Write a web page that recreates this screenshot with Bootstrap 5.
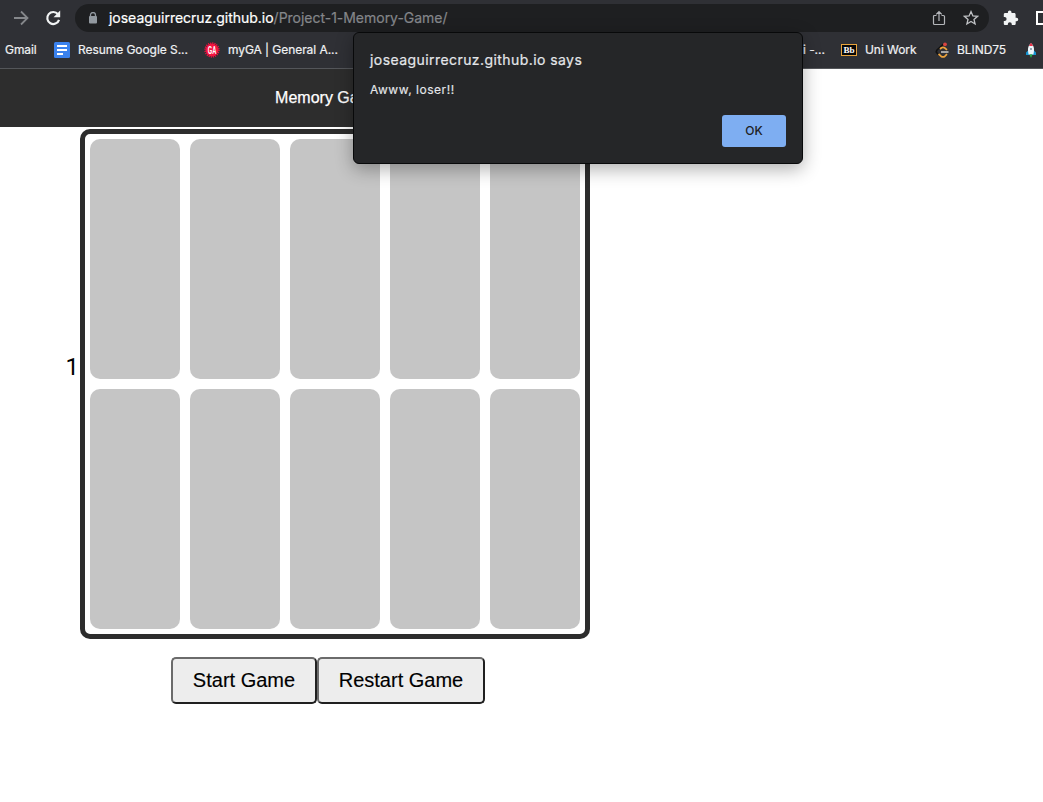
<!DOCTYPE html>
<html lang="en">
<head>
<meta charset="utf-8">
<meta name="viewport" content="width=device-width, initial-scale=1">
<title>Memory Game</title>
<link href="https://cdn.jsdelivr.net/npm/bootstrap@5.3.0/dist/css/bootstrap.min.css" rel="stylesheet">
<style>
body{height:802px;overflow:hidden;background:#fff;font-family:Inter,"Liberation Sans",sans-serif}
.chrome{height:69px;background:#2f3035;border-bottom:1px solid #54565a;color:#f0f1f3}
.toolbar{height:36px}
.toolbar svg,.bookmarks svg{display:block;flex:none}
.forward{margin-left:13px}
.reload{margin-left:16px}
.address{width:914px;height:28px;margin-left:14px;border-radius:14px;background:#1e1f21;font-size:14px}
.lock{margin-left:13px}
.address .url{margin-left:11px;margin-top:-1px;color:#84868a;letter-spacing:-.02px;-webkit-text-stroke:.2px}
.address .url span{color:#fff}
.star{margin-left:17px;margin-right:10px}
.puzzle{margin-left:14px}
.panel{margin-left:17px}
.bookmarks{height:28px;font-size:12px;letter-spacing:-.06px;-webkit-text-stroke:.2px}
.bookmark{flex:none;gap:8px}
.page{width:656px;font-family:"Liberation Sans",Arial,sans-serif;color:#000}
.title-bar{height:58px;background:#2d2d2d;font-size:16px;-webkit-text-stroke:.25px}
.score{width:80px;font-family:Roboto,sans-serif;font-size:24px;line-height:28px;padding-right:1px;padding-bottom:34px}
.board{width:510px;height:510px;border:5px solid #2d2d2d;border-radius:10px;display:grid;grid-template-columns:repeat(5,90px);grid-template-rows:repeat(2,240px);gap:10px;padding:5px}
.tile{background:#c5c5c5;border-radius:10px}
.game-btn{height:47px;background:#ededed;border:2px solid;border-color:#6b6b6b #202020 #202020 #6b6b6b;border-radius:5px;font-size:20px;color:#000;padding:0 0 2px;-webkit-text-stroke:.15px}
.alert-box{left:353px;top:32px;width:450px;height:132px;background:#252628;border:1px solid #08090a;border-radius:6px;box-shadow:0 5px 18px rgba(0,0,0,.32);color:#e4e6ea;padding:16px}
.alert-box h1{font-size:14px;line-height:22px;font-weight:400;margin:0;letter-spacing:.43px;-webkit-text-stroke:.2px}
.alert-box p{font-size:12px;line-height:20px;margin:9px 0 0;letter-spacing:.53px;-webkit-text-stroke:.15px}
.ok-btn{width:64px;height:32px;background:#7eaef2;border:0;border-radius:3px;color:#202124;font-size:12px;font-weight:500;padding:0;margin-top:15px}
</style>
</head>
<body>
<header class="chrome">
  <div class="toolbar d-flex align-items-center">
    <svg class="forward" width="16" height="16" viewBox="0 0 16 16" fill="none" stroke="#85878b" stroke-width="1.8"><path d="M1 8h13M8 1.5 14.5 8 8 14.5"/></svg>
    <svg class="reload" width="16" height="16" viewBox="0 0 16 16"><path d="M13 4.300A6 6 0 1 0 14 9.800" fill="none" stroke="#f1f3f4" stroke-width="2.200"/><path d="M15.200.500v6.700H8.500z" fill="#f1f3f4"/></svg>
    <div class="address d-flex align-items-center">
      <svg class="lock" width="10" height="12" viewBox="0 0 10 12"><path d="M2.500 5V3a2.500 2.500 0 0 1 5 0v2" fill="none" stroke="#9299a0" stroke-width="1.300"/><rect x="1" y="4" width="8" height="7.500" rx="1" fill="#9299a0"/></svg>
      <div class="url"><span>joseaguirrecruz.github.io</span>/Project-1-Memory-Game/</div>
      <svg class="ms-auto" width="14" height="16" viewBox="0 0 14 16" fill="none" stroke="#b4b6ba" stroke-width="1.200"><path d="M4.500 5.500h-2q-1 0-1 1v7q0 1 1 1h9q1 0 1-1v-7q0-1-1-1h-2M7 11V1.800M4.200 4.400 7 1.600l2.800 2.800"/></svg>
      <svg class="star" width="16" height="16" viewBox="0 0 16 16" fill="none" stroke="#c0c2c5" stroke-width="1.300"><path d="m8 1.600 1.900 4.300 4.700.4-3.600 3.100 1.100 4.600L8 11.500 3.900 14 5 9.400 1.400 6.300l4.700-.4z"/></svg>
    </div>
    <svg class="puzzle" width="16" height="16" viewBox="0 0 16 16" fill="#f1f3f4"><path d="M13.500 7.700h-.9V4.500c0-.8-.6-1.400-1.400-1.400H8.500v-.9a1.800 1.800 0 0 0-3.600 0v.9H2.200C1.400 3.100.800 3.700.800 4.500v2.600h.8a2 2 0 0 1 0 4H.800v2.600c0 .8.6 1.400 1.400 1.400h2.600v-.9a2 2 0 0 1 4 0v.9h2.500c.8 0 1.400-.6 1.400-1.400v-2.500h.8a1.750 1.750 0 0 0 0-3.500z"/></svg>
    <svg class="panel" width="7" height="16" viewBox="0 0 7 16"><path d="M8 2H1v12h7" fill="none" stroke="#fff" stroke-width="2"/></svg>
  </div>
  <nav class="bookmarks d-flex align-items-center text-nowrap">
    <div class="bookmark d-flex align-items-center" style="width:54px;padding-left:5px">Gmail</div>
    <div class="bookmark d-flex align-items-center" style="width:150px"><svg width="16" height="16" viewBox="0 0 16 16"><rect width="16" height="16" rx="1.500" fill="#3b82ee"/><path d="M3 4h10M3 8h10M3 12h6" stroke="#fff" stroke-width="2"/></svg><span>Resume Google S...</span></div>
    <div class="bookmark d-flex align-items-center" style="width:599px"><svg width="16" height="16" viewBox="0 0 16 16"><circle cx="8" cy="8" r="6.500" fill="#f5123f"/><circle cx="8" cy="8" r="7" fill="none" stroke="#f5123f" stroke-width="1.300" stroke-dasharray="1.200 1"/><text x="8" y="11.500" text-anchor="middle" textLength="8.500" lengthAdjust="spacingAndGlyphs" font-family="Liberation Sans" font-size="10" font-weight="700" fill="#fff">GA</text></svg><span>myGA | General A...</span></div>
    <div class="bookmark d-flex align-items-center" style="width:38px">i -...</div>
    <div class="bookmark d-flex align-items-center" style="width:93px"><svg width="16" height="16" viewBox="0 0 16 16"><rect x=".5" y="2.500" width="15" height="11" fill="#080808" stroke="#e8a33b"/><text x="8" y="11" text-anchor="middle" textLength="11" lengthAdjust="spacingAndGlyphs" font-family="Liberation Serif" font-size="8.500" font-weight="700" fill="#fff">Bb</text></svg><span>Uni Work</span></div>
    <div class="bookmark d-flex align-items-center" style="width:89px;gap:7px"><svg width="16" height="16" viewBox="0 0 16 16" fill="none" stroke-width="1.700"><path d="M9.500 2 3 8Q1.700 9.500 3 11l2 2" stroke="#111"/><path d="M4.500 12 7 14.200Q9 15.700 11 14.200L13 12.200M6 7 7.500 5.800Q9 4.800 10.500 5.800L13 7.800" stroke="#eda33c"/><path d="M7 10h7.500" stroke="#bbb"/><circle cx="11" cy="2.300" r="1.900" fill="#d84440"/></svg><span>BLIND75</span></div>
    <svg width="16" height="16" viewBox="0 0 16 16"><path d="M6 7.500 3 10.500V13h4zM10 7.500l3 3V13H9z" fill="#1594d2"/><path d="M8 1.200C4.500 4 4.500 8 5.700 12.500h4.600C11.500 8 11.500 4 8 1.200z" fill="#eef5fa"/><path d="M8 .800 5.900 4h4.200z" fill="#e9324a"/><circle cx="8" cy="7" r="1" fill="#789"/><path d="M6.500 12.500h3L8 16z" fill="#20b34b"/></svg>
  </nav>
</header>
<main class="page">
  <div class="title-bar text-white d-flex align-items-center justify-content-center"><span>Memory Game</span></div>
  <div class="d-flex align-items-center" style="margin-top:2px">
    <div class="score text-end">1</div>
    <div class="board">
      <div class="tile"></div><div class="tile"></div><div class="tile"></div><div class="tile"></div><div class="tile"></div>
      <div class="tile"></div><div class="tile"></div><div class="tile"></div><div class="tile"></div><div class="tile"></div>
    </div>
  </div>
  <div class="d-flex justify-content-center" style="margin-top:18px">
    <button class="game-btn" style="width:146px">Start Game</button><button class="game-btn" style="width:168px">Restart Game</button>
  </div>
</main>
<section class="alert-box position-absolute" role="alertdialog">
  <h1>joseaguirrecruz.github.io says</h1>
  <p>Awww, loser!!</p>
  <div class="d-flex justify-content-end"><button class="ok-btn">OK</button></div>
</section>
<script src="https://cdn.jsdelivr.net/npm/bootstrap@5.3.0/dist/js/bootstrap.bundle.min.js"></script>
</body>
</html>
